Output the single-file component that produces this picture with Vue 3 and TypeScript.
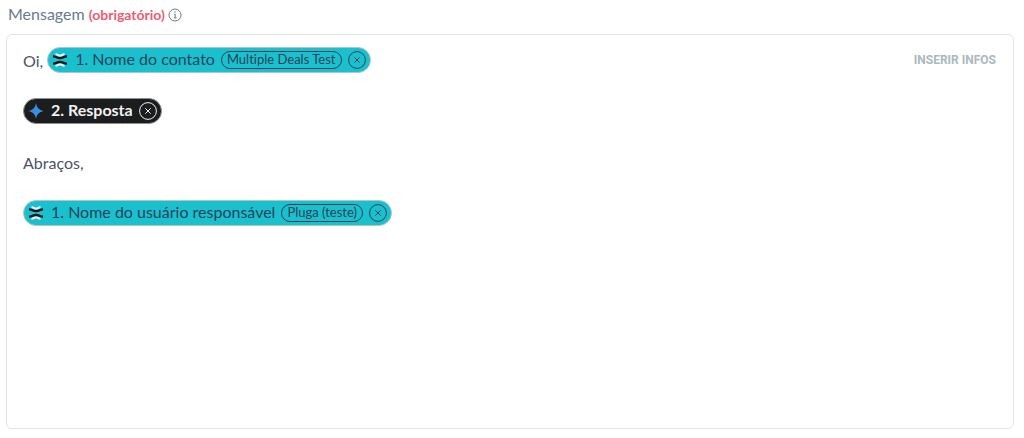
<script setup lang="ts">
import { ref } from 'vue'

interface Token {
  kind: 'text' | 'chip'
  text: string
  tag?: string
  theme?: 'teal' | 'dark'
}

const lines = ref<Token[][]>([
  [
    { kind: 'text', text: 'Oi,' },
    { kind: 'chip', text: '1. Nome do contato', tag: 'Multiple Deals Test', theme: 'teal' },
  ],
  [{ kind: 'chip', text: '2. Resposta', theme: 'dark' }],
  [{ kind: 'text', text: 'Abraços,' }],
  [{ kind: 'chip', text: '1. Nome do usuário responsável', tag: 'Pluga (teste)', theme: 'teal' }],
])

function removeToken(line: number, index: number): void {
  lines.value[line].splice(index, 1)
}
</script>

<template>
  <main class="field">
    <div class="field-head">
      <span id="message-label" class="label">Mensagem <strong class="required">(obrigatório)</strong></span>
      <button type="button" class="info" aria-label="Ajuda">
        <svg viewBox="0 0 14 14" width="14" height="14" fill="none" stroke="currentColor">
          <circle cx="7" cy="7" r="6" />
          <path d="M6 6.2h1.2v3.6M5.8 9.9h2.7" />
          <circle cx="7" cy="4" r=".7" fill="currentColor" stroke="none" />
        </svg>
      </button>
    </div>

    <section class="box">
      <div class="editor" role="textbox" aria-multiline="true" aria-labelledby="message-label" contenteditable="true" spellcheck="false">
        <div v-for="(line, l) in lines" :key="l" class="line">
          <template v-for="(token, t) in line" :key="t">
            <span v-if="token.kind === 'text'" class="words">{{ token.text }}</span>
            <span v-else class="chip" :class="token.theme" contenteditable="false">
              <svg v-if="token.theme === 'teal'" class="logo" viewBox="0 0 16 16" width="16" height="16" fill="none">
                <path d="M3.500 2.200C5.500 2.200 6 3.600 8 3.600s2.500-1.400 4.500-1.400M3.500 13.800c2 0 2.500-1.400 4.500-1.400s2.500 1.400 4.500 1.400" stroke="#fff" stroke-width="1.800" />
                <path d="M1 4.300C4 4.300 5 6.200 8 6.200s4-1.900 7-1.900M1 11.700c3 0 4-1.900 7-1.900s4 1.900 7 1.900" stroke="#071114" stroke-width="2.200" />
              </svg>
              <svg v-else class="logo" viewBox="0 0 16 16" width="16" height="16">
                <defs>
                  <linearGradient id="spark" x1="0" y1="0" x2="1" y2="0.200">
                    <stop offset="0" stop-color="#7a6cc4" />
                    <stop offset="0.450" stop-color="#3a8be0" />
                    <stop offset="1" stop-color="#2f9ce0" />
                  </linearGradient>
                </defs>
                <path d="M8 .5C9.200 5 11 6.800 15.500 8 11 9.200 9.200 11 8 15.500 6.800 11 5 9.200.5 8 5 6.800 6.800 5 8 .5z" fill="url(#spark)" />
              </svg>
              <span class="name">{{ token.text }}</span>
              <span v-if="token.tag" class="tag">{{ token.tag }}</span>
              <button type="button" class="remove" :aria-label="'Remover ' + token.text" @click="removeToken(l, t)">
                <svg viewBox="0 0 18 18" width="18" height="18" fill="none" stroke="currentColor">
                  <circle cx="9" cy="9" r="8.400" />
                  <path d="M6.300 6.300l5.400 5.400M11.700 6.300l-5.400 5.400" />
                </svg>
              </button>
            </span>
          </template>
        </div>
      </div>
      <button type="button" class="insert">INSERIR INFOS</button>
    </section>
  </main>
</template>

<style>
body {
  margin: 0;
  background: #fff;
}
</style>

<style scoped>
.field {
  box-sizing: border-box;
  min-height: 100vh;
  display: flex;
  flex-direction: column;
  gap: 9px;
  padding: 5px 10px 9px 6px;
  font-family: Lato, "Liberation Sans", sans-serif;
  font-size: 16px;
  font-variant-ligatures: none;
  color: #4a5568;
}
button {
  margin: 0;
  padding: 0;
  border: 0;
  background: none;
  color: inherit;
  font: inherit;
  cursor: pointer;
}
svg {
  display: block;
}
.field-head {
  display: flex;
  align-items: center;
  gap: 3px;
  height: 20px;
  padding-left: 2px;
}
.label {
  padding-bottom: 2px;
  line-height: 20px;
  color: #6b7a8c;
}
.required {
  font-size: 14px;
  font-weight: 700;
  color: #ef5b70;
}
.info {
  color: #777;
}
.box {
  flex: 1;
  display: flex;
  align-items: flex-start;
  justify-content: space-between;
  gap: 16px;
  padding: 12px 17px 12px 16px;
  border: 1px solid #e0e6e8;
  border-radius: 6px;
}
.editor {
  flex: 1;
  align-self: stretch;
  display: flex;
  flex-direction: column;
  gap: 25px;
  outline: none;
}
.line {
  display: flex;
  align-items: center;
  gap: 4px;
  min-height: 26px;
}
.words {
  padding-top: 2px;
  line-height: 20px;
}
.chip {
  box-sizing: border-box;
  display: inline-flex;
  align-items: center;
  height: 26px;
  padding: 0 4px;
  border: 1px solid #b4c5c8;
  border-radius: 13px;
  white-space: nowrap;
}
.teal {
  background: #1bc0cf;
  color: #234459;
}
.dark {
  border-color: #8d9092;
  background: #1b1d1f;
  color: #f2f2f2;
  font-weight: 700;
}
.name {
  margin: 0 6px 0 7px;
  padding-bottom: 2px;
  line-height: 20px;
}
.tag {
  box-sizing: border-box;
  height: 18px;
  margin-right: 6px;
  padding: 0 5px;
  border: 1px solid currentColor;
  border-radius: 9px;
  font-size: 13px;
  line-height: 15px;
}
.insert {
  height: 26px;
  font-family: Roboto, "Liberation Sans", sans-serif;
  font-size: 12px;
  font-weight: 700;
  color: #abb8be;
}
</style>
